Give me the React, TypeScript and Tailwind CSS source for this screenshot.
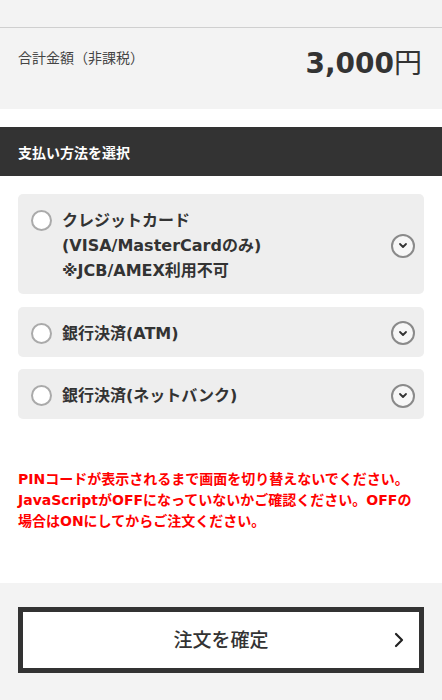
import { useState } from "react";

const font = { fontFamily: '"DejaVu Sans", "Noto Sans CJK JP", sans-serif' };

interface Method {
  id: string;
  lines: string[];
}

const methods: Method[] = [
  { id: "card", lines: ["クレジットカード", "(VISA/MasterCardのみ)", "※JCB/AMEX利用不可"] },
  { id: "atm", lines: ["銀行決済(ATM)"] },
  { id: "net", lines: ["銀行決済(ネットバンク)"] },
];

function ChevronCircle() {
  return (
    <span className="flex h-6 w-6 shrink-0 items-center justify-center rounded-full border-2 border-[#8a8a8a] bg-[#f7f7f7]">
      <svg width="10" height="7" viewBox="0 0 10 7" fill="none">
        <path d="M2 2l3 3 3-3" stroke="#333" strokeWidth="1.8" strokeLinecap="round" strokeLinejoin="round" />
      </svg>
    </span>
  );
}

export default function App() {
  const [selected, setSelected] = useState<string | null>(null);

  return (
    <div className="min-h-[700px] w-[442px] bg-white text-[#333]" style={font}>
      <div className="h-[28px] border-b border-[#cfcfcf] bg-[#f3f3f3]" />

      {/* 合計 */}
      <div className="flex h-[81px] items-start justify-between bg-[#f3f3f3] px-[18px] pt-[20px]">
        <span className="text-[14px] leading-[20px] text-[#444]">合計金額（非課税）</span>
        <span className="flex items-baseline pr-[2px] text-[28px] font-bold leading-[32px] text-[#333]">
          3,000<span className="text-[28px] font-normal">円</span>
        </span>
      </div>

      <div className="h-[18px]" />

      <div className="flex h-[49px] items-center bg-[#333] px-[18px] pt-[3px]">
        <h2 className="text-[14px] font-bold text-white">支払い方法を選択</h2>
      </div>

      <div className="flex flex-col gap-[12.5px] px-[18px] pt-[18px]">
        {methods.map((m) => (
          <button
            key={m.id}
            onClick={() => setSelected(m.id)}
            className="flex items-center rounded-[5px] bg-[#eeeeee] pb-[11px] pl-[13px] pr-[9px] pt-[14px] text-left"
          >
            <span className="flex flex-1 items-start gap-[10px]">
              <span className="mt-[2px] flex h-[21px] w-[21px] shrink-0 items-center justify-center rounded-full border-2 border-[#aaaaaa] bg-white">
                {selected === m.id && <span className="h-2.5 w-2.5 rounded-full bg-[#333]" />}
              </span>
              <span className="text-[16px] font-bold leading-[25px] text-[#333]">
                {m.lines.map((l) => (
                  <span key={l} className="block">
                    {l}
                  </span>
                ))}
              </span>
            </span>
            <ChevronCircle />
          </button>
        ))}
      </div>

      <p className="px-[18px] pt-[50px] text-[14px] font-bold leading-[21px] text-[#ff0000]">
        PINコードが表示されるまで画面を切り替えないでください。JavaScriptがOFFになっていないかご確認ください。OFFの場合はONにしてからご注文ください。
      </p>

      <div className="mt-[51px] bg-[#f3f3f3] px-[18px] pb-[27px] pt-[24px]">
        <button className="relative flex h-[66px] w-full items-center justify-center border-[5px] border-[#333] bg-white">
          <span className="text-[19px] font-medium text-[#333]">注文を確定</span>
          <svg className="absolute right-[15px]" width="10" height="16" viewBox="0 0 10 16" fill="none">
            <path d="M2 2l6 6-6 6" stroke="#222" strokeWidth="2.2" strokeLinecap="round" strokeLinejoin="round" />
          </svg>
        </button>
      </div>
    </div>
  );
}
